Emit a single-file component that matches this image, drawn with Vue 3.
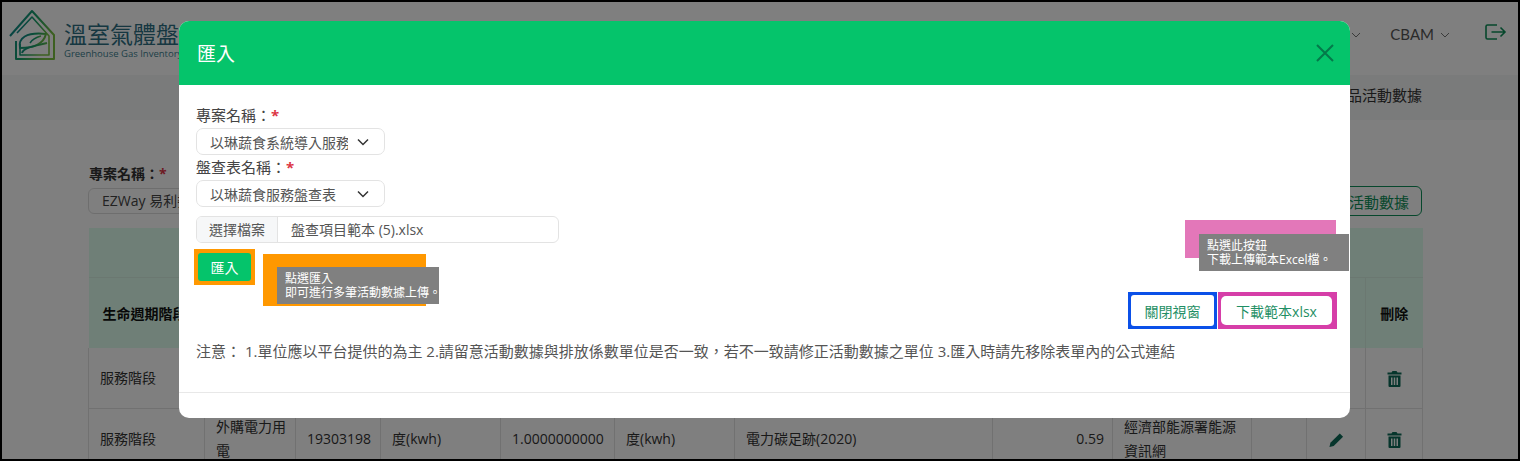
<script setup>
const rows = [
  { stage: '服務階段', source: '', code: '', unit: '', qty: '', unit2: '', factor: '', value: '', unit3: '', origin: '', tall: false },
  { stage: '服務階段', source: '外購電力用電', code: '19303198', unit: '度(kwh)', qty: '1.0000000000', unit2: '度(kwh)', factor: '電力碳足跡(2020)', value: '0.59', unit3: '度(kwh)', origin: '經濟部能源署能源資訊網', tall: true }
]
</script>

<template>
  <div class="screen">
    <!-- 背景頁面 -->
    <header class="topbar">
      <div class="brand">
        <svg class="brand__logo" viewBox="0 0 48 54" fill="none" stroke-linejoin="round">
          <defs>
            <linearGradient id="logoGrad" x1="0" y1="0" x2="1" y2="0.4">
              <stop offset="0" stop-color="#0d7f96" />
              <stop offset="0.55" stop-color="#17a06a" />
              <stop offset="1" stop-color="#7bc043" />
            </linearGradient>
          </defs>
          <path d="M2 28 L24 3 L46 27 V51 H8 V33" stroke="url(#logoGrad)" stroke-width="2" />
          <path d="M9 25 L24 9 L41 28 V47 H12 V36" stroke="url(#logoGrad)" stroke-width="1.6" />
          <path d="M12 40 C10 30 18 24 38 26 C36 34 30 40 12 40 Z" stroke="url(#logoGrad)" stroke-width="2" />
          <path d="M14 45 C16 39 28 38 39 35" stroke="url(#logoGrad)" stroke-width="2" />
          <path d="M22 35 C25 30 29 29 33 28" stroke="url(#logoGrad)" stroke-width="1.5" />
        </svg>
        <div>
          <div class="brand__name">溫室氣體盤查資訊平台</div>
          <div class="brand__sub">Greenhouse Gas Inventory Information Platform</div>
        </div>
      </div>
      <nav class="topnav">
        <svg class="chev chev--first" viewBox="0 0 10 6"><path d="M1 1l4 4 4-4" /></svg>
        <span class="topnav__item">CBAM</span>
        <svg class="chev" viewBox="0 0 10 6"><path d="M1 1l4 4 4-4" /></svg>
        <svg class="logout" viewBox="0 0 22 16" fill="none">
          <path d="M12 1H2.5A1.5 1.5 0 0 0 1 2.500v11A1.500 1.500 0 0 0 2.500 15H12" />
          <path d="M6.500 8H20M15.500 3.500 20 8l-4.500 4.500" />
        </svg>
      </nav>
    </header>

    <div class="subnav">產品活動數據</div>

    <main class="content">
      <div class="filter">
        <div class="filter__left">
          <div class="filter__label">專案名稱：<span class="req">*</span></div>
          <div class="filter__select">EZWay 易利委外服務</div>
        </div>
        <button class="outline-btn">新增產品活動數據</button>
      </div>

      <table class="grid">
        <colgroup>
          <col style="width: 116px" />
          <col style="width: 91px" />
          <col style="width: 85px" />
          <col style="width: 120px" />
          <col style="width: 114px" />
          <col style="width: 120px" />
          <col style="width: 134px" />
          <col style="width: 124px" />
          <col style="width: 120px" />
          <col style="width: 139px" />
          <col style="width: 55px" />
          <col style="width: 59px" />
          <col style="width: 57px" />
        </colgroup>
        <thead>
          <tr class="grid__top"><th colspan="13"></th></tr>
          <tr class="grid__head">
            <th>生命週期階段</th>
            <th colspan="10"></th>
            <th></th>
            <th class="center">刪除</th>
          </tr>
        </thead>
        <tbody>
          <tr v-for="(row, i) in rows" :key="i">
            <td>{{ row.stage }}</td>
            <td>{{ row.source }}</td>
            <td>{{ row.code }}</td>
            <td>{{ row.unit }}</td>
            <td>{{ row.qty }}</td>
            <td>{{ row.unit2 }}</td>
            <td colspan="2">{{ row.factor }}</td>
            <td class="num">{{ row.value }}</td>
            <td>{{ row.origin }}</td>
            <td></td>
            <td class="center">
              <svg v-if="row.tall" class="icon" viewBox="0 0 16 16"><path d="M11.500 1 15 4.500 5 14.500 0.500 15.500 1.500 11z" /></svg>
            </td>
            <td class="center">
              <svg class="icon" viewBox="0 0 14 16"><path d="M5 0h4l1 1.500h4V3.500H0V1.500h4zM1 4.500h12V15a1 1 0 0 1-1 1H2a1 1 0 0 1-1-1zM3.500 6.500V14h1.500V6.500zM6.250 6.500V14h1.500V6.500zM9 6.500V14h1.500V6.500z" fill-rule="evenodd" /></svg>
            </td>
          </tr>
        </tbody>
      </table>
    </main>

    <!-- 遮罩與視窗 -->
    <div class="backdrop"></div>
    <section class="modal">
      <div class="modal__head">
        <h2 class="modal__title">匯入</h2>
        <svg class="modal__close" viewBox="0 0 18 18"><path d="M1 1l16 16M17 1 1 17" /></svg>
      </div>

      <div class="modal__body">
        <label class="field-label">專案名稱：<span class="req">*</span></label>
        <div class="select">
          <span class="select__text">以琳蔬食系統導入服務</span>
          <svg class="select__chev" viewBox="0 0 12 8"><path d="M1 1.500l5 5 5-5" /></svg>
        </div>
        <label class="field-label">盤查表名稱：<span class="req">*</span></label>
        <div class="select">
          <span class="select__text">以琳蔬食服務盤查表</span>
          <svg class="select__chev" viewBox="0 0 12 8"><path d="M1 1.500l5 5 5-5" /></svg>
        </div>

        <div class="file">
          <span class="file__btn">選擇檔案</span>
          <span class="file__name">盤查項目範本 (5).xlsx</span>
        </div>

        <div class="mark-orange">
          <button class="import-btn">匯入</button>
        </div>

        <div class="actions">
          <div class="mark-blue"><button class="ghost-btn">關閉視窗</button></div>
          <div class="mark-pink"><button class="ghost-btn ghost-btn--wide">下載範本xlsx</button></div>
        </div>

        <p class="note">注意： 1.單位應以平台提供的為主 2.請留意活動數據與排放係數單位是否一致，若不一致請修正活動數據之單位 3.匯入時請先移除表單內的公式連結</p>
      </div>

      <div class="modal__foot"></div>

      <div class="hint hint--orange"></div>
      <div class="tip tip--orange">點選匯入<br />即可進行多筆活動數據上傳。</div>
      <div class="hint hint--pink"></div>
      <div class="tip tip--pink">點選此按鈕<br />下載上傳範本Excel檔。</div>
    </section>
  </div>
</template>

<style scoped>
.screen {
  position: relative;
  width: 1520px;
  height: 461px;
  box-sizing: border-box;
  border: 2px solid #000;
  overflow: hidden;
  background: #fff;
  color: #333;
  font-family: "Open Sans", "Noto Sans CJK TC", sans-serif;
  font-size: 15px;
}

.topbar {
  display: flex;
  justify-content: space-between;
  height: 73px;
  padding: 6px 11px 0 6px;
  box-sizing: border-box;
}

.brand {
  display: flex;
  gap: 8px;
}

.brand__logo {
  width: 48px;
  height: 54px;
  flex: none;
}

.brand__name {
  margin-top: 12px;
  font-size: 23px;
  line-height: 28px;
  color: #2d6f83;
  white-space: nowrap;
}

.brand__sub {
  font-size: 9.5px;
  line-height: 12px;
  color: #3d7f8f;
  white-space: nowrap;
}

.topnav {
  display: flex;
  align-items: flex-start;
  padding-top: 16px;
}

.topnav__item {
  margin-left: 29px;
  font-family: Lato, "Noto Sans", sans-serif;
  font-size: 15px;
  line-height: 20px;
  color: #555;
}

.chev {
  width: 10px;
  height: 6px;
  margin: 8px 0 0 6px;
  fill: none;
  stroke: #777;
  stroke-width: 1;
}

.logout {
  width: 22px;
  height: 16px;
  margin: 0 0 0 35px;
  stroke: #0d8f58;
  stroke-width: 1.600;
}

.subnav {
  height: 45px;
  padding-right: 96px;
  background: #f5f7f6;
  text-align: right;
  font-size: 15px;
  line-height: 40px;
  color: #333;
}

.content {
  padding: 30px 96px 0 86px;
}

.filter {
  display: flex;
  justify-content: space-between;
  align-items: flex-end;
  height: 64px;
}

.filter__label {
  margin-left: 1px;
  font-size: 14px;
  line-height: 20px;
  font-weight: 600;
  color: #333;
}

.filter__select {
  width: 300px;
  height: 26px;
  margin-top: 4px;
  padding-left: 13px;
  box-sizing: border-box;
  border: 1px solid #ddd;
  border-radius: 6px;
  font-size: 14px;
  line-height: 24px;
  color: #444;
}

.outline-btn {
  height: 30px;
  margin-bottom: -2px;
  padding: 0 12px;
  border: 1px solid #0d8f58;
  border-radius: 6px;
  background: transparent;
  font: inherit;
  font-size: 15px;
  color: #0d8f58;
}

.grid {
  width: 1334px;
  margin-top: 14px;
  table-layout: fixed;
  border-collapse: collapse;
}

.grid__top th {
  height: 47px;
  background: #deffee;
  border-bottom: 1px solid #d6f0e2;
}

.grid__head th {
  height: 70px;
  padding: 0 14px 0 14px;
  box-sizing: border-box;
  background: #deffee;
  text-align: left;
  vertical-align: middle;
  font-size: 14px;
  font-weight: 700;
  color: #111;
  white-space: nowrap;
  overflow: hidden;
}

.grid__head th.center {
  padding: 0;
  border-left: 1px solid #d6f0e2;
  text-align: center;
}

.grid td {
  height: 61px;
  padding: 0 8px 0 11px;
  box-sizing: border-box;
  border: 1px solid #e3e3e3;
  border-top: 0;
  font-size: 14px;
  line-height: 24px;
  color: #333;
}

.grid td.num {
  text-align: right;
}

.grid td.center {
  padding: 0;
  text-align: center;
}

.icon {
  display: inline-block;
  width: 15px;
  height: 16px;
  vertical-align: middle;
  fill: #0d6b58;
}

.backdrop {
  position: absolute;
  inset: 0;
  background: rgba(0, 0, 0, 0.5);
}

.modal {
  position: absolute;
  left: 177px;
  top: 19px;
  width: 1171px;
  height: 397px;
  display: flex;
  flex-direction: column;
  border-radius: 10px;
  background: #fff;
  overflow: hidden;
}

.modal__head {
  display: flex;
  align-items: center;
  justify-content: space-between;
  flex: none;
  height: 64px;
  padding: 0 16px 0 18px;
  box-sizing: border-box;
  background: #05c46b;
}

.modal__title {
  margin: 0;
  font-size: 19px;
  font-weight: 400;
  color: #fff;
}

.modal__close {
  width: 18px;
  height: 18px;
  fill: none;
  stroke: #04794a;
  stroke-width: 2;
}

.modal__body {
  flex: 1;
  display: flex;
  flex-direction: column;
  align-items: flex-start;
  padding: 19px 13px 0 17px;
  box-sizing: border-box;
  color: #555;
}

.field-label {
  height: 24px;
  font-size: 15px;
  line-height: 22px;
  color: #444;
}

.req {
  color: #dc3545;
  font-weight: 700;
}

.select {
  display: flex;
  align-items: center;
  justify-content: space-between;
  width: 189px;
  height: 27px;
  padding: 0 15px 0 13px;
  box-sizing: border-box;
  border: 1px solid #e3e3e3;
  border-radius: 7px;
  font-size: 14px;
  color: #555;
}

.select + .field-label {
  margin-top: 1px;
}

.select__text {
  width: 138px;
  overflow: hidden;
  white-space: nowrap;
}

.select__chev {
  flex: none;
  width: 12px;
  height: 8px;
  fill: none;
  stroke: #333;
  stroke-width: 1.500;
}

.file {
  display: flex;
  width: 363px;
  height: 27px;
  margin-top: 9px;
  box-sizing: border-box;
  border: 1px solid #e3e3e3;
  border-radius: 6px;
  overflow: hidden;
  font-size: 14px;
  line-height: 25px;
}

.file__btn {
  padding: 0 12px;
  background: #f6f7f8;
  border-right: 1px solid #e3e3e3;
}

.file__name {
  padding-left: 13px;
}

.mark-orange {
  margin: 6px 0 0 -2px;
  padding: 4px;
  background: #ff9800;
}

.import-btn {
  display: block;
  width: 53px;
  height: 28px;
  padding: 0;
  border: 0;
  border-radius: 3px;
  background: #05c46b;
  font: inherit;
  font-size: 14px;
  color: #fff;
}

.actions {
  display: flex;
  align-self: flex-end;
  margin: 7px 0 0;
}

.mark-blue,
.mark-pink {
  padding: 3px;
  height: 37px;
  box-sizing: border-box;
}

.mark-blue {
  background: #0b50e8;
}

.mark-pink {
  margin-left: 1px;
  padding: 4px 5px 4px 3px;
  background: #d63ea8;
}

.ghost-btn {
  display: block;
  width: 83px;
  height: 100%;
  padding: 0;
  border: 0;
  border-radius: 3px;
  background: #fff;
  font: inherit;
  font-size: 14px;
  color: #1f8f65;
}

.ghost-btn--wide {
  width: 111px;
  border-radius: 5px;
}

.note {
  margin: 11px 0 0;
  font-size: 15px;
  line-height: 22px;
  white-space: nowrap;
  color: #555;
}

.modal__foot {
  flex: none;
  height: 25px;
  border-top: 1px solid #e8e8e8;
}

.hint,
.tip {
  position: absolute;
}

.hint--orange {
  left: 84px;
  top: 233px;
  width: 163px;
  height: 52px;
  background: #ff9800;
}

.hint--pink {
  left: 1006px;
  top: 199px;
  width: 151px;
  height: 38px;
  background: #e377b9;
}

.tip {
  padding: 5px 0 0 8px;
  box-sizing: border-box;
  background: #808080;
  color: #fff;
  font-size: 12px;
  line-height: 14px;
  white-space: nowrap;
}

.tip--orange {
  left: 98px;
  top: 246px;
  width: 162px;
  height: 37px;
}

.tip--pink {
  left: 1020px;
  top: 213px;
  width: 150px;
  height: 37px;
}
</style>
